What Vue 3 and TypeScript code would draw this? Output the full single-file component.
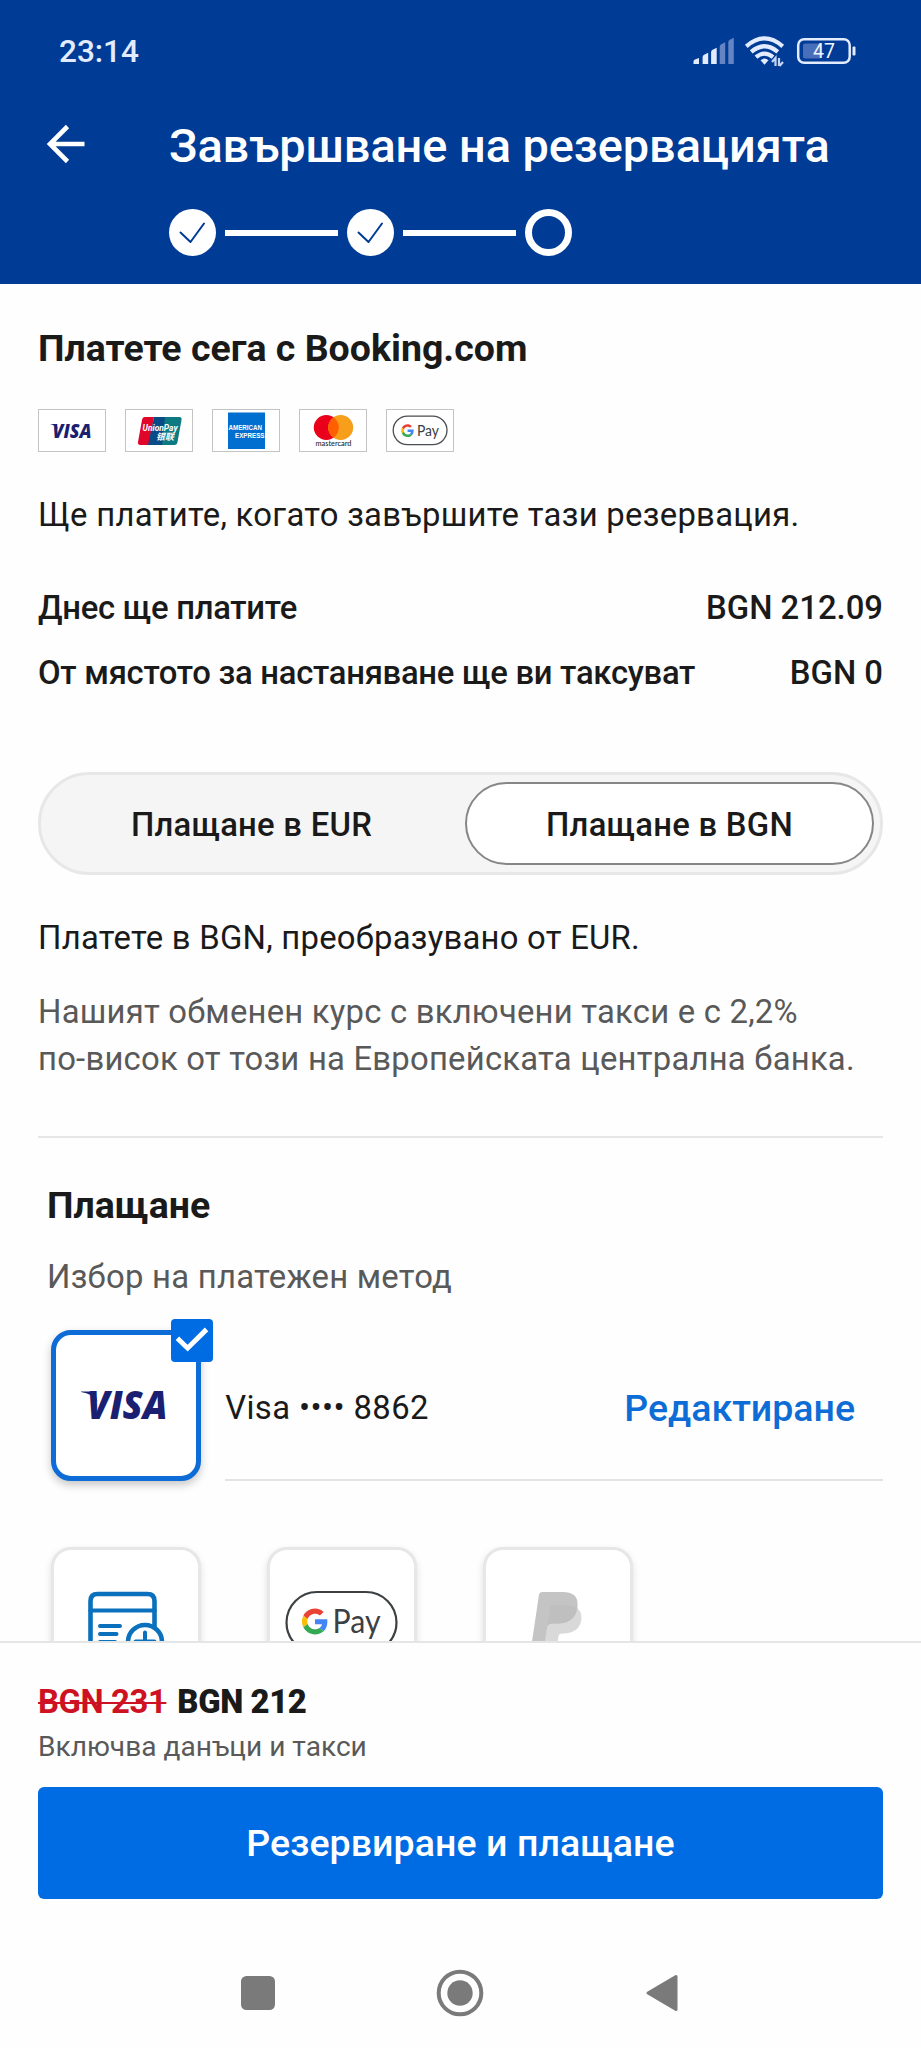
<script setup lang="ts">
interface Charge {
  label: string
  amount: string
}

const charges: Charge[] = [
  { label: 'Днес ще платите', amount: 'BGN 212.09' },
  { label: 'От мястото за настаняване ще ви таксуват', amount: 'BGN 0' },
]
</script>

<template>
  <div class="screen">
    <header class="top">
      <div class="status">
        <span class="clock">23:14</span>
        <svg class="status-icons" width="166" height="34" viewBox="0 0 166 34">
          <g fill="#e3ecff">
            <path d="M0.500 30v-2.500q0-1.500 1.500-2l4-1.500v6z" />
            <path d="M9.600 30v-7q0-1.500 1.500-2.200l4.100-2V30z" />
            <path d="M18.100 30V18q0-1.500 1.500-2.200l4.100-2V30z" />
          </g>
          <g fill="#6584c4">
            <path d="M26.700 30V12.500q0-1.500 1.500-2.200l4-2V30z" />
            <path d="M35.300 30V8q0-1.500 1.500-2.200l4-2V30z" />
          </g>
          <g fill="none" stroke="#e3ecff" stroke-width="4.200">
            <path d="M53.300 12.300Q71.500-3.500 89.700 12.300" />
            <path d="M58.200 17.900Q71.500 6.500 84.800 17.900" />
            <path d="M63 23.200Q71.500 16 80 23.200" />
          </g>
          <path d="M67.500 26.200Q71.500 23 75.500 26.200L71.500 30.800z" fill="#e3ecff" />
          <path d="M79 28l3.500-4v8M86 32v-8M86.500 32l3.500-4" fill="none" stroke="#c5d5f5" stroke-width="2.200" />
          <rect x="105.200" y="5.200" width="51.500" height="23.600" rx="6" fill="none" stroke="#e3ecff" stroke-width="2.500" />
          <path d="M112 9.500h15v15h-15q-2 0-2-2v-11q0-2 2-2z" fill="#4a6fba" />
          <rect x="159.500" y="12.500" width="3" height="9" rx="1" fill="#e3ecff" />
          <text x="131" y="24.300" text-anchor="middle" class="battery">47</text>
        </svg>
      </div>
      <div class="title-row">
        <svg class="back" width="40" height="40" viewBox="0 0 40 40" fill="none" stroke="#fff" stroke-width="4.600">
          <path d="M38.500 20H5M21.500 2.500L4 20l17.500 17.500" />
        </svg>
        <h1 class="title">Завършване на резервацията</h1>
      </div>
      <div class="steps">
        <template v-for="n in 2" :key="n">
          <span class="step done">
            <svg width="47" height="47" viewBox="0 0 47 47" fill="none" stroke="#003b95" stroke-width="2" stroke-linecap="round" stroke-linejoin="round">
              <path d="M11.500 23.500L21.500 33 35 14.500" />
            </svg>
          </span>
          <span class="bar"></span>
        </template>
        <span class="step current"></span>
      </div>
    </header>

    <main class="content">
      <h2 class="heading">Платете сега с Booking.com</h2>
      <div class="brands">
        <span class="brand">
          <svg width="66.500" height="41" viewBox="0 0 66.500 41">
            <text x="13.500" y="27.500" textLength="39" lengthAdjust="spacingAndGlyphs" class="visa" font-size="18.500">VISA</text>
            <path d="M11 14h6l2 5q-3-4-8-5z" fill="#1a1f71" />
          </svg>
        </span>
        <span class="brand">
          <svg width="66.500" height="41" viewBox="0 0 66.500 41">
            <path d="M18 7h10l-5 28H14.500q-3 0-2.500-3l4-22q.5-3 3-3z" fill="#e0062a" />
            <path d="M28 7h14l-5 28H22z" fill="#084b86" />
            <path d="M39 7h14.500q2.500 0 2 3l-4 22q-.5 3-3 3H36z" fill="#0d7a82" />
            <text x="16.500" y="20.500" textLength="35" lengthAdjust="spacingAndGlyphs" class="union">UnionPay</text>
            <text x="30" y="30" textLength="18" lengthAdjust="spacingAndGlyphs" class="union-cn">银联</text>
          </svg>
        </span>
        <span class="brand">
          <svg width="66.500" height="41" viewBox="0 0 66.500 41">
            <rect x="15" y="2.500" width="37" height="36.500" fill="#016fd0" />
            <text x="15.500" y="20.300" textLength="33.500" lengthAdjust="spacingAndGlyphs" class="amex">AMERICAN</text>
            <text x="22" y="27.800" textLength="29.500" lengthAdjust="spacingAndGlyphs" class="amex">EXPRESS</text>
          </svg>
        </span>
        <span class="brand">
          <svg width="66.500" height="41" viewBox="0 0 66.500 41">
            <circle cx="26.300" cy="17.500" r="12.500" fill="#eb001b" />
            <circle cx="40.700" cy="17.500" r="12.500" fill="#f79e1b" />
            <path d="M33.500 7.300a12.500 12.500 0 0 1 0 20.400a12.500 12.500 0 0 1 0-20.400z" fill="#ff5f00" />
            <text x="15.500" y="36.300" textLength="36" lengthAdjust="spacingAndGlyphs" class="mastercard">mastercard</text>
          </svg>
        </span>
        <span class="brand">
          <svg width="66.500" height="41" viewBox="0 0 66.500 41">
            <rect x="6.200" y="6.100" width="53.800" height="28.500" rx="14.250" fill="none" stroke="#4a4d51" stroke-width="1.300" />
            <g transform="translate(14.200 14.300) scale(.265)">
              <path d="M24 9.500c3.540 0 6.710 1.220 9.210 3.600l6.850-6.850C35.900 2.380 30.470 0 24 0 14.620 0 6.510 5.380 2.560 13.220l7.980 6.190C12.430 13.720 17.740 9.500 24 9.500z" fill="#ea4335" />
              <path d="M46.980 24.550c0-1.570-.15-3.090-.38-4.550H24v9.020h12.940c-.58 2.960-2.260 5.480-4.780 7.180l7.730 6c4.510-4.180 7.090-10.360 7.090-17.650z" fill="#4285f4" />
              <path d="M10.530 28.590c-.48-1.450-.76-2.990-.76-4.590s.27-3.140.76-4.590l-7.980-6.190C.92 16.460 0 20.120 0 24c0 3.880.92 7.540 2.560 10.780l7.970-6.190z" fill="#fbbc05" />
              <path d="M24 48c6.480 0 11.930-2.130 15.890-5.810l-7.730-6c-2.150 1.450-4.920 2.300-8.160 2.300-6.260 0-11.570-4.220-13.470-9.910l-7.980 6.190C6.510 42.620 14.620 48 24 48z" fill="#34a853" />
            </g>
            <text x="30" y="26" textLength="22" lengthAdjust="spacingAndGlyphs" class="pay" font-size="15.500">Pay</text>
          </svg>
        </span>
      </div>
      <p class="line when">Ще платите, когато завършите тази резервация.</p>
      <dl class="charges">
        <div v-for="c in charges" :key="c.label" class="charge">
          <dt>{{ c.label }}</dt>
          <dd>{{ c.amount }}</dd>
        </div>
      </dl>
      <div class="toggle">
        <button class="option">Плащане в EUR</button>
        <button class="option selected">Плащане в BGN</button>
      </div>
      <p class="line converted">Платете в BGN, преобразувано от EUR.</p>
      <p class="line muted rate">Нашият обменен курс с включени такси е с 2,2%<br />по-висок от този на Европейската централна банка.</p>
      <hr class="divider" />
      <h2 class="heading payment">Плащане</h2>
      <p class="line muted choose">Избор на платежен метод</p>

      <div class="chosen">
        <div class="tile active">
          <svg width="100" height="60" viewBox="-5 -14 100 60">
            <text x="6" y="30" textLength="80.500" lengthAdjust="spacingAndGlyphs" class="visa" font-size="38">VISA</text>
            <path d="M0 2.500h13l3.500 10q-5-8-16.500-9.500z" fill="#1a1f71" />
          </svg>
          <span class="check">
            <svg width="42.500" height="42.500" viewBox="0 0 43 43" fill="none" stroke="#fff" stroke-width="5">
              <path d="M6.500 19.500L16.800 29.500 36 10.500" />
            </svg>
          </span>
        </div>
        <div class="chosen-info">
          <span class="card-name">Visa •••• 8862</span>
          <a class="edit">Редактиране</a>
        </div>
      </div>

      <div class="methods">
        <div class="tile">
          <svg width="143" height="143" viewBox="1.500 0 143 143" fill="none" stroke="#0b71bd" stroke-width="4.600" stroke-linecap="round">
            <path d="M60 102.500H45q-7 0-7-7V51q0-7 7-7h50q7 0 7 7v26.500" />
            <path d="M38 60.500h64" stroke-width="4.200" />
            <path d="M47.500 76h20M47.500 84h16.500M47.500 92h15" stroke-width="4" />
            <circle cx="92.500" cy="92" r="17" />
            <path d="M92.500 82.500v19M83 91.500h19" stroke-width="4" />
          </svg>
        </div>
        <div class="tile">
          <svg width="143" height="143" viewBox="1 0 143 143">
            <rect x="17.500" y="42" width="110" height="61" rx="30.500" fill="none" stroke="#3c4043" stroke-width="2.200" />
            <g transform="translate(33 58.500) scale(.54)">
              <path d="M24 9.500c3.540 0 6.710 1.220 9.210 3.600l6.850-6.850C35.900 2.380 30.470 0 24 0 14.620 0 6.510 5.380 2.560 13.220l7.980 6.190C12.430 13.720 17.740 9.500 24 9.500z" fill="#ea4335" />
              <path d="M46.980 24.550c0-1.570-.15-3.090-.38-4.550H24v9.020h12.940c-.58 2.960-2.260 5.480-4.780 7.180l7.730 6c4.510-4.180 7.090-10.360 7.090-17.650z" fill="#4285f4" />
              <path d="M10.530 28.590c-.48-1.450-.76-2.990-.76-4.590s.27-3.140.76-4.590l-7.980-6.190C.92 16.460 0 20.120 0 24c0 3.880.92 7.540 2.560 10.780l7.970-6.190z" fill="#fbbc05" />
              <path d="M24 48c6.480 0 11.930-2.130 15.890-5.810l-7.730-6c-2.150 1.450-4.920 2.300-8.160 2.300-6.260 0-11.570-4.220-13.470-9.910l-7.980 6.190C6.510 42.620 14.620 48 24 48z" fill="#34a853" />
            </g>
            <text x="63.500" y="82.500" textLength="48" lengthAdjust="spacingAndGlyphs" class="pay" font-size="32">Pay</text>
          </svg>
        </div>
        <div class="tile">
          <svg width="143" height="143" viewBox="0 0 143 143">
            <path d="M90 57q7 5 5 14.500q-3 11.500-17 12h-2.500q-2.500 0-3 2.500L70 103H56l6-30z" fill="#d9d9d9" />
            <path d="M56 42h20.500q16.500 0 15 14.500q-2 16-18.500 17h-7q-4 0-4.800 4L57 103H44.300l8.700-58.500q.5-2.500 3-2.500z" fill="#c4c4c4" />
            <path d="M66 55.500q13-2 25.300 2q-2 15-18.300 16h-7q-3 0-4.300 2l2.300-17.500q.3-2.200 2-2.500z" fill="#bfbfbf" />
          </svg>
        </div>
      </div>
    </main>

    <footer class="checkout">
      <div class="prices">
        <s class="old">BGN 231</s>
        <strong class="new">BGN 212</strong>
      </div>
      <p class="taxes">Включва данъци и такси</p>
      <button class="submit">Резервиране и плащане</button>
    </footer>

    <nav class="system">
      <svg width="34" height="34"><rect width="34" height="34" rx="5.500" fill="#7a7a7a" /></svg>
      <svg width="48" height="48"><circle cx="24" cy="24" r="21.300" fill="none" stroke="#7a7a7a" stroke-width="4" /><circle cx="24" cy="24" r="12.700" fill="#7a7a7a" /></svg>
      <svg width="34" height="40"><path d="M3 20L31 3.500v33z" fill="#7a7a7a" stroke="#7a7a7a" stroke-width="3" stroke-linejoin="round" /></svg>
    </nav>
  </div>
</template>

<style>
body {
  margin: 0;
  background: #fefefe;
}
</style>

<style scoped>
.screen {
  width: 921px;
  height: 2048px;
  overflow: hidden;
  display: flex;
  flex-direction: column;
  background: #fefefe;
  color: #1a1a1a;
  font-family: Roboto, "Noto Sans", sans-serif;
  font-size: 32.83px;
}
h1, h2, p, dl, dd, hr { margin: 0; border: 0; }
button { font: inherit; color: inherit; border: 0; padding: 0; background: none; }
svg { display: block; flex: none; }

.top {
  flex: none;
  box-sizing: border-box;
  height: 284px;
  padding-top: 31px;
  background: #003b95;
  color: #fff;
}
.status {
  display: flex;
  justify-content: space-between;
  height: 40px;
  padding: 0 62px 0 59px;
}
.clock { margin-top: 1px; font-size: 31.5px; line-height: 40px; font-weight: 500; color: #e3ecff; }
.status-icons { margin-top: 3px; }
.battery { font: 400 19.5px Roboto, sans-serif; fill: #f2f6ff; }
.title-row { display: flex; align-items: center; height: 60px; margin-top: 45px; padding-left: 46px; }
.back { margin-bottom: 5px; }
.title { margin-left: 83px; font-size: 46.9px; line-height: 60px; font-weight: 500; letter-spacing: -.06px; white-space: nowrap; }
.steps { display: flex; align-items: center; gap: 9px; margin: 33px 0 0 169px; }
.step { box-sizing: border-box; width: 47px; height: 47px; border-radius: 50%; }
.done { background: #fff; }
.current { border: 7px solid #fff; }
.bar { width: 113px; height: 6px; background: #fff; }

.content { flex: none; box-sizing: border-box; height: 1357px; overflow: hidden; padding: 41px 38px 0; }
.heading { font-size: 37.5px; line-height: 47px; font-weight: 700; white-space: nowrap; }
.brands { display: flex; gap: 18.5px; margin: 37px 0 0 -.5px; }
.brand { border: 1px solid #c4c4c4; background: #fff; }
.line { line-height: 47px; letter-spacing: .25px; white-space: nowrap; }
.when { margin-top: 40px; letter-spacing: .29px; }
.charges { margin-top: 45.5px; display: grid; gap: 18px; font-weight: 500; }
.charge { display: flex; justify-content: space-between; line-height: 47px; white-space: nowrap; }
.charge dt { letter-spacing: -.28px; }
.toggle {
  box-sizing: border-box;
  display: grid;
  grid-template-columns: 1fr 409px;
  height: 103.5px;
  margin-top: 75px;
  padding: 7px 6px 7px 0;
  border: 3px solid #e7e7e7;
  border-radius: 52px;
  background: #f5f5f5;
}
.option { box-sizing: border-box; font-weight: 500; letter-spacing: .25px; border-radius: 42px; padding: 4px 3px 0 0; }
.selected { padding-right: 0; border: 2px solid #868686; background: #fff; }
.converted { margin-top: 39.5px; }
.muted { color: #595959; }
.rate { margin-top: 27px; letter-spacing: .22px; }
.divider { height: 2px; margin-top: 53.5px; background: #e7e7e7; }
.payment { margin: 44px 0 0 9px; }
.choose { margin: 24.5px 0 0 9px; }

.tile {
  position: relative;
  box-sizing: border-box;
  width: 150.5px;
  height: 150.5px;
  border: 3px solid #e7e7e7;
  border-radius: 20px;
  background: #fff;
  box-shadow: 0 3px 7px rgba(0, 0, 0, .13);
}
.active {
  display: flex;
  align-items: center;
  justify-content: center;
  border: 5px solid #0d6cd6;
  box-shadow: 0 4px 8px rgba(0, 0, 0, .22);
}
.check { position: absolute; top: -16px; right: -17px; border-radius: 4px; background: #006ce4; }
.chosen { display: flex; gap: 24px; margin: 29.5px 0 0 12.7px; }
.chosen-info {
  flex: 1;
  display: flex;
  justify-content: space-between;
  align-items: center;
  padding: 8px 28px 0 0;
  border-bottom: 2px solid #e3e3e3;
}
.card-name { letter-spacing: .4px; }
.edit { color: #0d6cd6; font-size: 37.5px; font-weight: 500; }
.methods { display: flex; gap: 65.5px; margin: 66px 0 0 12.7px; }

.checkout { flex: none; box-sizing: border-box; height: 258px; padding: 36px 38px 0; border-top: 2px solid #e5e5e5; }
.prices { display: flex; gap: 11px; line-height: 47px; font-weight: 700; letter-spacing: -.4px; }
.old { color: #cd1223; text-decoration-thickness: 2px; }
.taxes { margin-top: 1px; font-size: 28.1px; line-height: 40px; color: #595959; }
.submit {
  display: block;
  width: 845px;
  height: 112px;
  margin-top: 20px;
  border-radius: 6px;
  background: #006ce4;
  color: #fff;
  font-size: 37.5px;
  font-weight: 500;
  letter-spacing: .07px;
}
.system {
  flex: none;
  display: flex;
  align-items: center;
  justify-content: space-between;
  box-sizing: border-box;
  height: 149px;
  padding: 38px 242px 0 241px;
}

.visa { font-family: "Open Sans", sans-serif; font-weight: 800; font-style: italic; fill: #1a1f71; }
.union { font: italic 700 9px Roboto, sans-serif; fill: #fff; }
.union-cn { font: italic 700 9px "Noto Sans CJK SC", sans-serif; fill: #fff; }
.amex { font: 700 6.5px "Liberation Sans", sans-serif; fill: #fff; }
.mastercard { font: 500 7px Lato, sans-serif; fill: #231f20; }
.pay { font-family: Lato, sans-serif; fill: #3c4043; }
</style>
